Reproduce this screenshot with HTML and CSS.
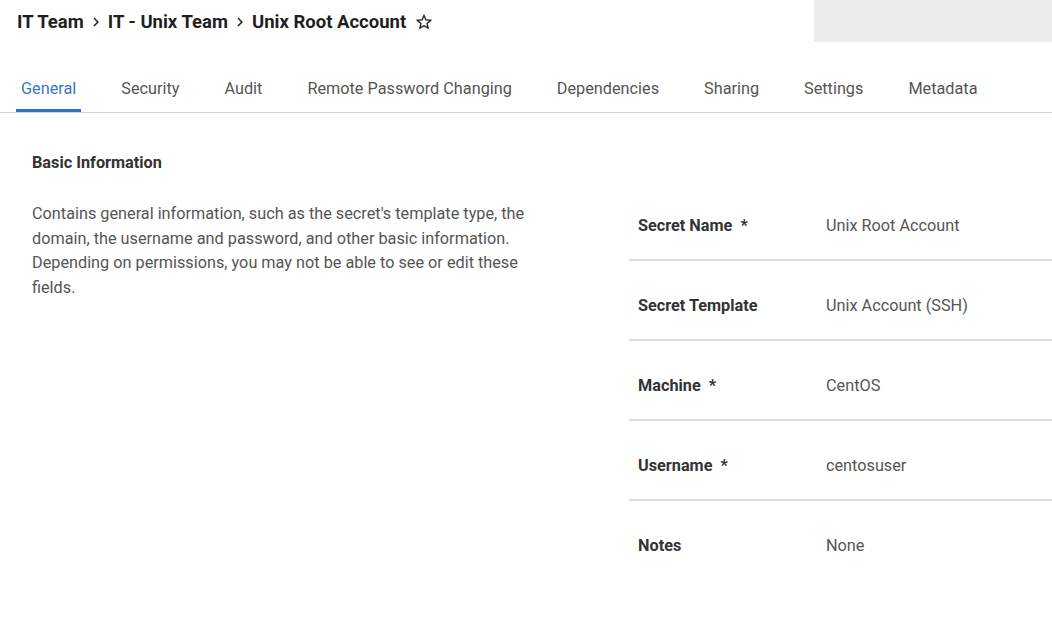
FILE: index.html
```html
<!DOCTYPE html>
<html>
<head>
<meta charset="utf-8">
<link rel="stylesheet" href="styles.css">
</head>
<body>
<header class="top">
  <div class="crumbs">
    <span>IT Team</span>
    <svg class="chev" viewBox="0 0 24 24"><path d="M8.6 16.6 13.2 12 8.6 7.4 10 6l6 6-6 6z"/></svg>
    <span>IT - Unix Team</span>
    <svg class="chev" viewBox="0 0 24 24"><path d="M8.6 16.6 13.2 12 8.6 7.4 10 6l6 6-6 6z"/></svg>
    <span>Unix Root Account</span>
    <svg class="star" viewBox="0 0 24 24"><path d="M22 9.24l-7.19-.62L12 2 9.19 8.63 2 9.24l5.46 4.73L5.82 21 12 17.27 18.18 21l-1.63-7.03L22 9.24zM12 15.4l-3.76 2.27 1-4.28-3.32-2.88 4.38-.38L12 6.1l1.71 4.04 4.38.38-3.32 2.88 1 4.28L12 15.4z"/></svg>
  </div>
  <div class="greybox"></div>
</header>
<nav class="tabs">
  <a class="tab active">General</a>
  <a class="tab">Security</a>
  <a class="tab">Audit</a>
  <a class="tab">Remote Password Changing</a>
  <a class="tab">Dependencies</a>
  <a class="tab">Sharing</a>
  <a class="tab">Settings</a>
  <a class="tab">Metadata</a>
</nav>
<main class="content">
  <section class="intro">
    <h2>Basic Information</h2>
    <p>Contains general information, such as the secret's template type, the domain, the username and password, and other basic information. Depending on permissions, you may not be able to see or edit these fields.</p>
  </section>
  <section class="fields">
    <div class="row"><div class="label">Secret Name&nbsp; *</div><div class="value">Unix Root Account</div></div>
    <div class="row"><div class="label">Secret Template</div><div class="value">Unix Account (SSH)</div></div>
    <div class="row"><div class="label">Machine&nbsp; *</div><div class="value">CentOS</div></div>
    <div class="row"><div class="label">Username&nbsp; *</div><div class="value">centosuser</div></div>
    <div class="row last"><div class="label">Notes</div><div class="value">None</div></div>
  </section>
</main>
</body>
</html>
```
FILE: styles.css
```css
* { box-sizing: border-box; }
body {
  margin: 0;
  font-family: Roboto, "Liberation Sans", sans-serif;
  background: #fff;
  color: #333;
}
.top {
  display: flex;
  justify-content: space-between;
  height: 42px;
}
.crumbs {
  display: flex;
  align-items: center;
  padding: 2px 0 0 17px;
  font-size: 18.5px;
  font-weight: 700;
  color: #1f1f1f;
  gap: 4px;
}
.chev { width: 18px; height: 18px; fill: #222; margin: 0 -1px; }
.star { width: 20px; height: 20px; fill: #222; margin-left: 4px; }
.greybox {
  width: 238px;
  height: 42px;
  background: #ececec;
}
.tabs {
  display: flex;
  gap: 35px;
  padding-left: 16px;
  height: 71px;
  align-items: flex-end;
  border-bottom: 1px solid #d4d4d4;
}
.tab {
  padding: 0 5px 10px;
  font-size: 16.25px;
  color: #555;
  border-bottom: 3px solid transparent;
  line-height: 20px;
}
.tab.active {
  color: #3a78c0;
  border-bottom-color: #2f74c9;
}
.content {
  display: flex;
  justify-content: space-between;
}
.intro {
  width: 550px;
  padding: 41px 0 0 32px;
}
.intro h2 {
  margin: 0 0 30px;
  font-size: 16.25px;
  font-weight: 700;
  color: #333;
  line-height: 18px;
}
.intro p {
  margin: 0;
  font-size: 16.25px;
  line-height: 24.6px;
  color: #555;
}
.fields {
  width: 423px;
  padding-top: 68px;
}
.row {
  display: flex;
  height: 80px;
  padding: 33px 0 0 9px;
  border-bottom: 2px solid #dcdcdc;
  font-size: 16.25px;
  line-height: 24px;
}
.row.last { border-bottom: none; }
.label {
  width: 188px;
  font-weight: 700;
  color: #333;
}
.value { color: #555; }
```
